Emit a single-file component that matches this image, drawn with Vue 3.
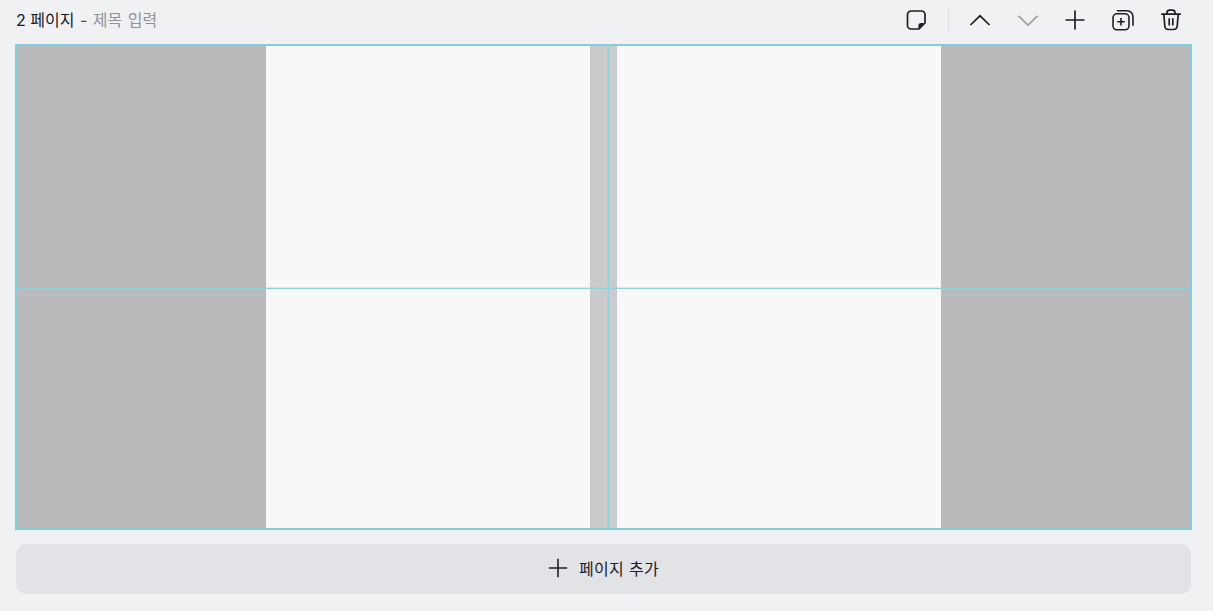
<template>
  <div class="page-editor">
    <header class="toolbar">
      <div class="title">
        <span>2 페이지</span>
        <span class="dash">-</span>
        <span class="placeholder">제목 입력</span>
      </div>
      <div class="actions">
        <button class="icon-btn memo" type="button" aria-label="메모">
          <svg width="24" height="24" viewBox="0 0 24 24" fill="none" stroke="currentColor" stroke-width="1.7">
            <path d="M7 3h10.500a3.500 3.500 0 0 1 3.500 3.500v8.500l-6 6H7a3.500 3.500 0 0 1-3.500-3.500V6.500A3.500 3.500 0 0 1 7 3z" stroke-linejoin="round" />
            <path d="M21 15.200 15 21h-.6v-3.200a2.800 2.800 0 0 1 2.800-2.800z" fill="currentColor" stroke="none" />
          </svg>
        </button>
        <span class="divider"></span>
        <button class="icon-btn" type="button" aria-label="위로">
          <svg width="24" height="24" viewBox="0 0 24 24" fill="none" stroke="currentColor" stroke-width="1.7">
            <path d="M2.500 17 12 7.800 21.500 17" />
          </svg>
        </button>
        <button class="icon-btn off" type="button" aria-label="아래로">
          <svg width="24" height="24" viewBox="0 0 24 24" fill="none" stroke="currentColor" stroke-width="1.7">
            <path d="M2.500 7.800 12 17l9.500-9.200" />
          </svg>
        </button>
        <button class="icon-btn narrow" type="button" aria-label="추가">
          <svg width="24" height="24" viewBox="0 0 24 24" fill="none" stroke="currentColor" stroke-width="1.7">
            <path d="M12 2.500v19M2.500 12h19" />
          </svg>
        </button>
        <button class="icon-btn" type="button" aria-label="복제">
          <svg width="24" height="24" viewBox="0 0 24 24" fill="none" stroke="currentColor" stroke-width="1.6">
            <rect x="2" y="5.800" width="16" height="16" rx="4" />
            <path d="M6.500 2.800h9.500a6 6 0 0 1 6 6v8.500" stroke-linecap="round" />
            <path d="M10 10v7.600M6.200 13.800h7.600" />
          </svg>
        </button>
        <button class="icon-btn" type="button" aria-label="삭제">
          <svg width="24" height="24" viewBox="0 0 24 24" fill="none" stroke="currentColor" stroke-width="1.7">
            <path d="M2.800 6.200h18.400" stroke-linecap="round" />
            <path d="M8 6V4.800a2.600 2.600 0 0 1 2.600-2.600h2.800A2.600 2.600 0 0 1 16 4.800V6" />
            <path d="M4.800 6.400 5.800 18a3.800 3.800 0 0 0 3.800 3.500h4.800a3.800 3.800 0 0 0 3.800-3.500l1-11.600" />
            <path d="M10.200 10.800v6M13.800 10.800v6" stroke-linecap="round" />
          </svg>
        </button>
      </div>
    </header>

    <div class="spread">
      <div class="outside"></div>
      <div class="paper"></div>
      <div class="gutter"></div>
      <div class="paper"></div>
      <div class="outside"></div>
      <span class="guide vertical"></span>
      <span class="guide horizontal"></span>
    </div>

    <button class="add-page" type="button">
      <svg width="20" height="20" viewBox="0 0 20 20" fill="none" stroke="currentColor" stroke-width="1.6">
        <path d="M10 .8v18.400M.8 10h18.400" />
      </svg>
      <span>페이지 추가</span>
    </button>
  </div>
</template>

<script setup>
</script>

<style>
html,
body {
  background: #f0f1f3;
}
</style>

<style scoped>
.page-editor {
  height: 611px;
  box-sizing: border-box;
  padding: 0 21px 0 15px;
  background: #f0f1f3;
  font-family: Inter, "Noto Sans CJK KR", sans-serif;
  color: #15181c;
  overflow: hidden;
}

.toolbar {
  height: 44px;
  display: flex;
  align-items: center;
  justify-content: space-between;
  padding: 0 9px 4px 1px;
  box-sizing: border-box;
}

.title {
  display: flex;
  gap: 5.500px;
  font-size: 16px;
  line-height: 20px;
}

.dash {
  color: #4c4f55;
}

.placeholder {
  color: #8f9298;
  word-spacing: 1px;
}

.actions {
  display: flex;
  align-items: center;
}

.icon-btn {
  width: 24px;
  height: 24px;
  padding: 0;
  border: 0;
  background: none;
  color: #1d2025;
  display: block;
  margin-left: 24px;
}

.icon-btn svg {
  display: block;
}

.memo,
.divider + .icon-btn {
  margin-left: 0;
}

.icon-btn.narrow {
  margin-left: 23px;
}

.off {
  color: #9a9da2;
}

.divider {
  width: 1px;
  height: 26px;
  background: #dcdde0;
  margin: 0 19px 0 20px;
}

.spread {
  position: relative;
  width: 1177px;
  height: 486px;
  box-sizing: border-box;
  border: 2px solid #7fcfdc;
  display: flex;
  background: #b9b9b9;
}

.outside {
  width: 249px;
  background: #bababa;
}

.paper {
  width: 324px;
  background: #f8f8f8;
}

.gutter {
  width: 27px;
  background: #cbcbcb;
}

.guide {
  position: absolute;
  background: #8ed1de;
}

.guide.vertical {
  left: 591px;
  top: 0;
  bottom: 0;
  width: 1px;
  box-shadow: -1px 0 0 rgba(142, 209, 222, 0.3);
}

.guide.horizontal {
  left: 0;
  right: 0;
  top: 242px;
  height: 1px;
  box-shadow: 0 -1px 0 rgba(142, 209, 222, 0.3);
}

.add-page {
  width: 1175px;
  height: 50px;
  margin: 14px 0 0 1px;
  padding: 0 0 2px;
  border: 0;
  border-radius: 10px;
  background: #e2e3e6;
  color: #1d2025;
  display: flex;
  align-items: center;
  justify-content: center;
  gap: 11px;
  font-family: inherit;
  font-size: 16px;
  letter-spacing: 0.3px;
}
</style>
